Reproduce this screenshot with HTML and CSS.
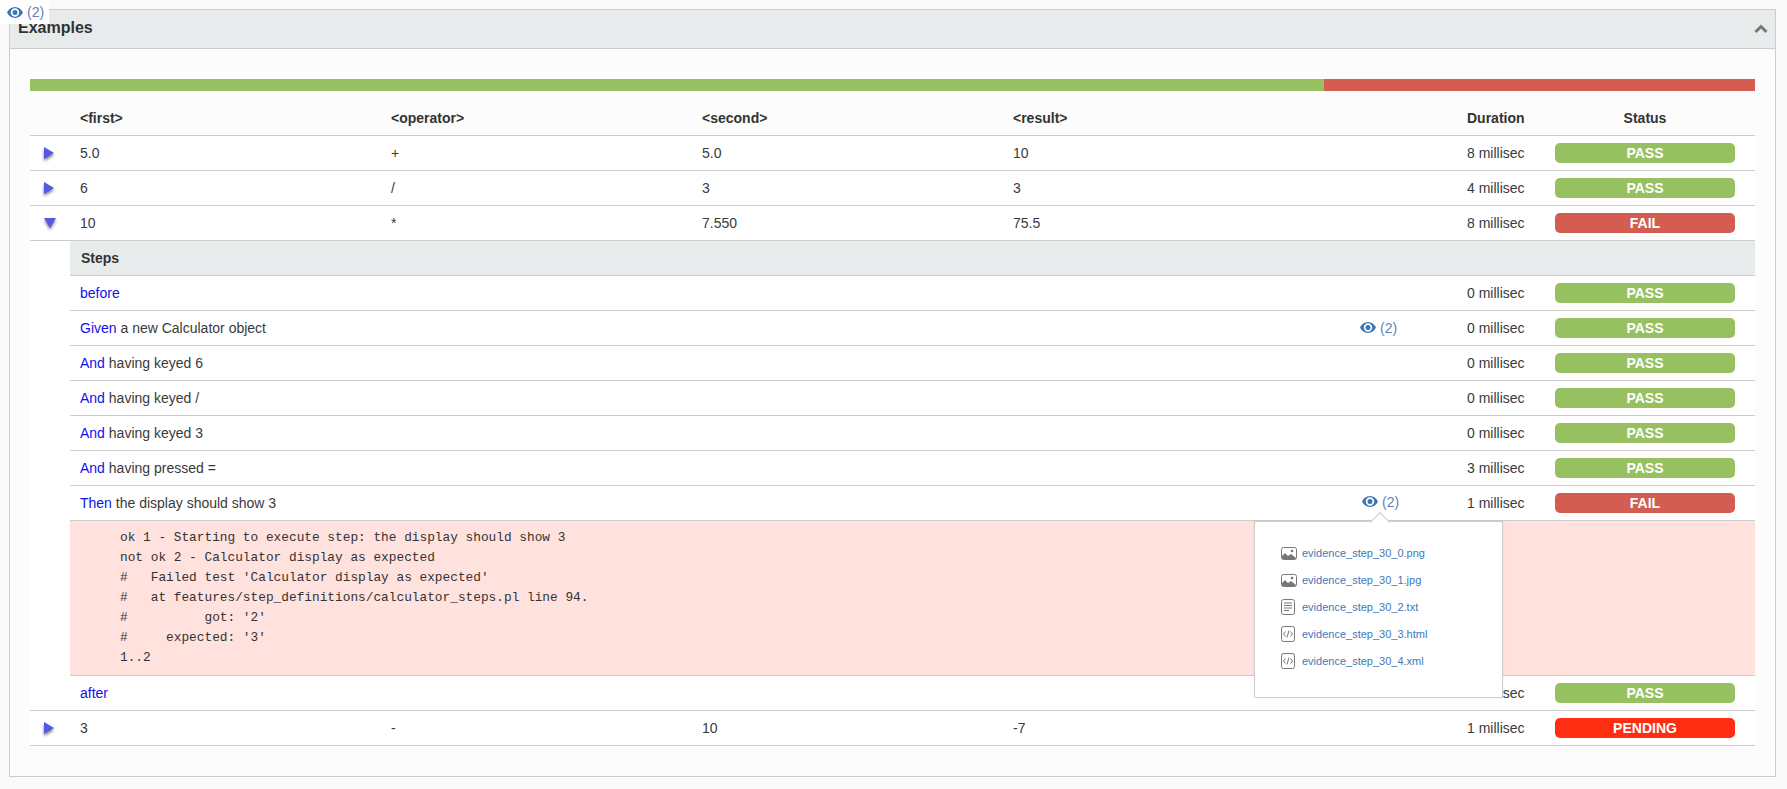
FILE: index.html
```html
<!DOCTYPE html>
<html lang="en">
<head>
<meta charset="utf-8">
<title>Examples</title>
<link rel="stylesheet" href="styles.css">
</head>
<body>
<svg width="0" height="0" class="defs">
  <symbol id="eye" viewBox="0 0 16 11"><path d="M8 0C4.400 0 1.600 2.200 0 5.500 1.600 8.800 4.400 11 8 11s6.400-2.200 8-5.500C14.400 2.200 11.600 0 8 0zm0 1.300a4.200 4.200 0 1 1 0 8.400 4.200 4.200 0 0 1 0-8.400zm0 1.700a2.500 2.500 0 1 0 0 5 2.500 2.500 0 0 0 0-5z" fill-rule="evenodd"/></symbol>
  <symbol id="img" viewBox="0 0 16 13"><rect x=".5" y=".5" width="15" height="12" rx="2" fill="#fff" stroke="#777"/><path d="M1 12V9l3-3 3 3 3-2 5 4v1z" fill="#777"/><circle cx="11" cy="4" r="1.300" fill="#777"/></symbol>
  <symbol id="txt" viewBox="0 0 14 16"><rect x=".5" y=".5" width="13" height="15" rx="2" fill="#fff" stroke="#777"/><path d="M3 4h8M3 6.500h8M3 9h8M3 11.500h5" stroke="#777" fill="none"/></symbol>
  <symbol id="code" viewBox="0 0 14 16"><rect x=".5" y=".5" width="13" height="15" rx="2" fill="#fff" stroke="#777"/><path d="M4.500 5.500 2.500 8l2 2.500M9.500 5.500l2 2.500-2 2.500M8 4.500 6 11.500" stroke="#777" fill="none"/></symbol>
</svg>

<a class="corner-evidence"><svg class="eye"><use href="#eye"/></svg><span>(2)</span></a>

<section class="panel">
  <header class="panel-head">
    <h2>Examples</h2>
    <svg class="chevron" viewBox="0 0 14 10"><path d="M1.500 8 7 2.500 12.500 8" fill="none" stroke="#777" stroke-width="3"/></svg>
  </header>
  <div class="panel-body">
    <div class="progress"><div class="progress-pass"></div><div class="progress-fail"></div></div>

    <div class="row row-head">
      <div class="c-arrow"></div>
      <div class="c-val">&lt;first&gt;</div>
      <div class="c-val">&lt;operator&gt;</div>
      <div class="c-val">&lt;second&gt;</div>
      <div class="c-val">&lt;result&gt;</div>
      <div class="c-ev"></div>
      <div class="c-dur">Duration</div>
      <div class="c-status">Status</div>
    </div>

    <div class="row">
      <div class="c-arrow"><svg class="tri" viewBox="0 0 12 14"><path d="M1 1l10 6-10 6z"/></svg></div>
      <div class="c-val">5.0</div><div class="c-val">+</div><div class="c-val">5.0</div><div class="c-val">10</div>
      <div class="c-ev"></div><div class="c-dur">8 millisec</div>
      <div class="c-status"><span class="badge pass">PASS</span></div>
    </div>
    <div class="row">
      <div class="c-arrow"><svg class="tri" viewBox="0 0 12 14"><path d="M1 1l10 6-10 6z"/></svg></div>
      <div class="c-val">6</div><div class="c-val">/</div><div class="c-val">3</div><div class="c-val">3</div>
      <div class="c-ev"></div><div class="c-dur">4 millisec</div>
      <div class="c-status"><span class="badge pass">PASS</span></div>
    </div>
    <div class="row">
      <div class="c-arrow"><svg class="tri tri-down" viewBox="0 0 14 12"><path d="M1 1h12l-6 10z"/></svg></div>
      <div class="c-val">10</div><div class="c-val">*</div><div class="c-val">7.550</div><div class="c-val">75.5</div>
      <div class="c-ev"></div><div class="c-dur">8 millisec</div>
      <div class="c-status"><span class="badge fail">FAIL</span></div>
    </div>

    <div class="steps-wrap">
      <div class="steps">
        <div class="row step-title">Steps</div>
        <div class="row">
          <div class="c-step"><a class="kw">before</a></div>
          <div class="c-ev"></div><div class="c-dur">0 millisec</div>
          <div class="c-status"><span class="badge pass">PASS</span></div>
        </div>
        <div class="row">
          <div class="c-step"><a class="kw">Given</a> a new Calculator object</div>
          <div class="c-ev"><a class="evidence"><svg class="eye"><use href="#eye"/></svg><span>(2)</span></a></div>
          <div class="c-dur">0 millisec</div>
          <div class="c-status"><span class="badge pass">PASS</span></div>
        </div>
        <div class="row">
          <div class="c-step"><a class="kw">And</a> having keyed 6</div>
          <div class="c-ev"></div><div class="c-dur">0 millisec</div>
          <div class="c-status"><span class="badge pass">PASS</span></div>
        </div>
        <div class="row">
          <div class="c-step"><a class="kw">And</a> having keyed /</div>
          <div class="c-ev"></div><div class="c-dur">0 millisec</div>
          <div class="c-status"><span class="badge pass">PASS</span></div>
        </div>
        <div class="row">
          <div class="c-step"><a class="kw">And</a> having keyed 3</div>
          <div class="c-ev"></div><div class="c-dur">0 millisec</div>
          <div class="c-status"><span class="badge pass">PASS</span></div>
        </div>
        <div class="row">
          <div class="c-step"><a class="kw">And</a> having pressed =</div>
          <div class="c-ev"></div><div class="c-dur">3 millisec</div>
          <div class="c-status"><span class="badge pass">PASS</span></div>
        </div>
        <div class="row">
          <div class="c-step"><a class="kw">Then</a> the display should show 3</div>
          <div class="c-ev c-ev-open">
            <a class="evidence evidence-open"><svg class="eye"><use href="#eye"/></svg><span>(2)</span></a>
            <div class="popover">
              <ul>
                <li><svg class="fi fi-img"><use href="#img"/></svg><a>evidence_step_30_0.png</a></li>
                <li><svg class="fi fi-img"><use href="#img"/></svg><a>evidence_step_30_1.jpg</a></li>
                <li><svg class="fi"><use href="#txt"/></svg><a>evidence_step_30_2.txt</a></li>
                <li><svg class="fi"><use href="#code"/></svg><a>evidence_step_30_3.html</a></li>
                <li><svg class="fi"><use href="#code"/></svg><a>evidence_step_30_4.xml</a></li>
              </ul>
            </div>
          </div>
          <div class="c-dur">1 millisec</div>
          <div class="c-status"><span class="badge fail">FAIL</span></div>
        </div>
        <pre class="error">ok 1 - Starting to execute step: the display should show 3
not ok 2 - Calculator display as expected
#   Failed test 'Calculator display as expected'
#   at features/step_definitions/calculator_steps.pl line 94.
#          got: '2'
#     expected: '3'
1..2</pre>
        <div class="row row-last">
          <div class="c-step"><a class="kw">after</a></div>
          <div class="c-ev"></div><div class="c-dur">0 millisec</div>
          <div class="c-status"><span class="badge pass">PASS</span></div>
        </div>
      </div>
    </div>

    <div class="row">
      <div class="c-arrow"><svg class="tri" viewBox="0 0 12 14"><path d="M1 1l10 6-10 6z"/></svg></div>
      <div class="c-val">3</div><div class="c-val">-</div><div class="c-val">10</div><div class="c-val">-7</div>
      <div class="c-ev"></div><div class="c-dur">1 millisec</div>
      <div class="c-status"><span class="badge pending">PENDING</span></div>
    </div>
  </div>
</section>
</body>
</html>
```
FILE: styles.css
```css
* { box-sizing: border-box; }
html, body { margin: 0; height: 100%; overflow: hidden; }
body {
  padding: 9px 11px 0 9px;
  background: #fafafa;
  font-family: "Liberation Sans", Arial, sans-serif;
  font-size: 14px;
  color: #3a3a3a;
}
.defs { position: absolute; }
.corner-evidence {
  position: absolute;
  left: 0;
  top: 0;
  width: 49px;
  height: 24px;
  background: #fff;
  display: flex;
  align-items: center;
  padding-left: 7px;
  gap: 4px;
  color: #5f82b4;
}
.eye { width: 16px; height: 11px; fill: #3a76b5; flex: none; }
.panel {
  height: 768px;
  border: 1px solid #ccc;
  background: #fcfcfc;
}
.panel-head {
  height: 39px;
  background: #e8ebec;
  border-bottom: 1px solid #ccc;
  display: flex;
  justify-content: space-between;
  align-items: center;
  padding: 0 7px 0 8px;
}
.panel-head h2 { margin: 0; font-size: 16px; font-weight: bold; line-height: 36px; align-self: flex-start; color: #333; }
.chevron { width: 14px; height: 10px; }
.panel-body { padding: 30px 20px 0 20px; }
.progress { display: flex; height: 12px; }
.progress-pass { width: 1294px; background: #97c160; }
.progress-fail { flex: 1; background: #d45d52; }
.row {
  display: flex;
  align-items: center;
  height: 35px;
  border-bottom: 1px solid #ccc;
  background: #fff;
}
.row-head { height: 45px; background: transparent; font-weight: bold; padding-top: 10px; color: #333; }
.c-arrow { width: 40px; flex: none; display: flex; padding-left: 13px; }
.c-val { width: 311px; flex: none; padding-left: 10px; }
.c-ev { flex: 1; }
.c-dur { width: 88px; flex: none; }
.c-status { width: 200px; flex: none; padding-right: 20px; text-align: center; }
.tri { width: 12px; height: 14px; fill: #5458e4; filter: drop-shadow(0 2px 1.500px rgba(70,70,70,.7)); }
.tri-down { width: 14px; height: 12px; }
.badge {
  display: block;
  height: 20px;
  line-height: 20px;
  border-radius: 5px;
  color: #fff;
  font-weight: bold;
  text-align: center;
}
.pass { background: #97c160; }
.fail { background: #d45d52; }
.pending { background: #ff2d12; }
.steps-wrap { padding-left: 40px; background: #fff; border-bottom: 1px solid #ccc; }
.steps .row-last { border-bottom: 0; height: 34px; }
.step-title { background: #e8ebec; font-weight: bold; padding-left: 11px; height: 35px; color: #333; }
.c-step { width: 1240px; flex: none; padding-left: 10px; }
.kw { color: #1010ee; }
.c-ev-open { position: relative; }
.evidence { display: inline-flex; align-items: center; gap: 4px; margin-left: 50px; color: #5f82b4; }
.evidence-open { margin-left: 52px; position: relative; top: -1px; }
.error {
  margin: 0;
  height: 155px;
  padding: 7px 0 0 50px;
  background: #ffe1de;
  border-bottom: 1px solid #ccc;
  font-family: "Liberation Mono", "DejaVu Sans Mono", monospace;
  font-size: 12.800px;
  line-height: 20px;
  color: #333;
}
.popover {
  position: absolute;
  z-index: 5;
  left: -56px;
  top: 26px;
  width: 249px;
  height: 177px;
  background: #fff;
  border: 1px solid #ccc;
  border-radius: 2px;
  box-shadow: 0 0 2px rgba(0,0,0,.08);
}
.popover::before {
  content: "";
  position: absolute;
  left: 118px;
  top: -7px;
  width: 13px;
  height: 13px;
  background: #fff;
  border-left: 1px solid #ccc;
  border-top: 1px solid #ccc;
  transform: rotate(45deg);
}
.popover ul { list-style: none; margin: 0; padding: 18px 0 0 26px; }
.popover li { display: flex; align-items: center; height: 27px; gap: 7px; }
.popover a { color: #3f78b8; font-size: 11px; }
.fi { width: 14px; height: 16px; flex: none; }
.fi-img { width: 16px; height: 13px; margin-right: -2px; }
```
